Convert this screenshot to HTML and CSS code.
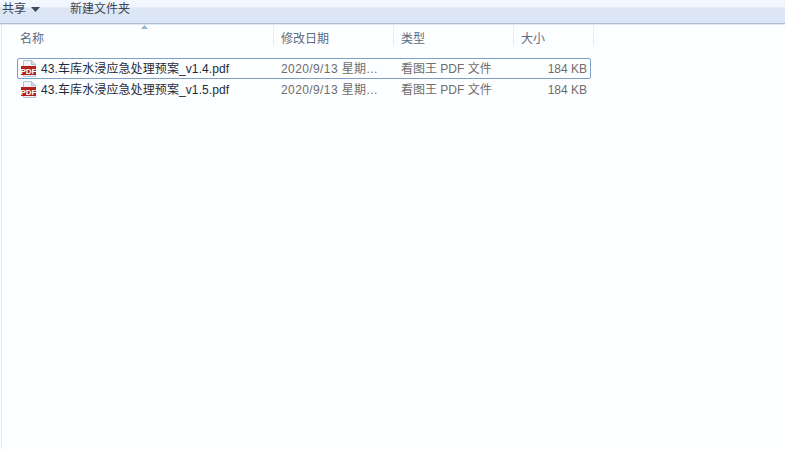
FILE: index.html
```html
<!DOCTYPE html>
<html lang="zh">
<head>
<meta charset="utf-8">
<title>文件夹</title>
<link rel="stylesheet" href="styles.css">
</head>
<body>
<div class="toolbar">
  <span class="tool share">共享<svg class="caret" width="9" height="5" viewBox="0 0 9 5"><path d="M0 0h9L4.500 5z" fill="#3c4a5c"/></svg></span>
  <span class="tool">新建文件夹</span>
</div>
<div class="pane">
  <div class="header">
    <div class="col c-name first">名称<svg class="sort" width="7" height="4" viewBox="0 0 7 4"><path d="M3.500 0L7 4H0z" fill="#8fb6d6"/></svg></div>
    <div class="col c-date">修改日期</div>
    <div class="col c-type">类型</div>
    <div class="col c-size">大小</div>
  </div>
  <div class="rows">
    <div class="row selected">
      <div class="cell c-name file">
        <svg class="icon" width="16" height="17" viewBox="0 0 16 17"><path d="M2.500 .5h8l4 4v12h-12z" fill="#eef4fa" stroke="#b4c3d4"/><path d="M10.500 .5v4h4z" fill="#cfdeec" stroke="#b4c3d4"/><rect x="0" y="6" width="15" height="9" fill="#b3211c"/><text x="7.500" y="13.700" class="pdf">PDF</text></svg>
        <span class="fname">43.车库水浸应急处理预案_v1.4.pdf</span>
      </div>
      <div class="cell c-date">2020/9/13 星期...</div>
      <div class="cell c-type">看图王 PDF 文件</div>
      <div class="cell c-size">184 KB</div>
    </div>
    <div class="row">
      <div class="cell c-name file">
        <svg class="icon" width="16" height="17" viewBox="0 0 16 17"><path d="M2.500 .5h8l4 4v12h-12z" fill="#eef4fa" stroke="#b4c3d4"/><path d="M10.500 .5v4h4z" fill="#cfdeec" stroke="#b4c3d4"/><rect x="0" y="6" width="15" height="9" fill="#b3211c"/><text x="7.500" y="13.700" class="pdf">PDF</text></svg>
        <span class="fname">43.车库水浸应急处理预案_v1.5.pdf</span>
      </div>
      <div class="cell c-date">2020/9/13 星期...</div>
      <div class="cell c-type">看图王 PDF 文件</div>
      <div class="cell c-size">184 KB</div>
    </div>
  </div>
</div>
</body>
</html>
```
FILE: styles.css
```css
html, body {
  margin: 0;
  height: 100%;
  overflow: hidden;
}
body {
  display: flex;
  flex-direction: column;
  background: #fdfeff;
  font-family: "Liberation Sans", "Noto Sans CJK SC", sans-serif;
  font-size: 12px;
  color: #1e2a38;
}
.toolbar {
  flex: none;
  height: 24px;
  box-sizing: border-box;
  display: flex;
  align-items: flex-start;
  padding: 2px 0 0 2px;
  gap: 30px;
  line-height: 14px;
  color: #3a4656;
  background: linear-gradient(#f4f9ff 0, #eff5fd 7px, #dce6f4 8px, #dce6f4 100%);
  border-bottom: 1px solid #aebdd3;
  box-shadow: 0 1px 0 #dfe8f3;
}
.tool {
  display: flex;
  align-items: center;
}
.caret {
  margin-left: 5px;
}
.pane {
  flex: 1;
  margin-left: 1px;
  border-left: 1px solid #dfe9f5;
  padding-left: 15px;
  display: flex;
  flex-direction: column;
}
.header {
  display: flex;
  height: 21px;
  margin-top: 1px;
  color: #5c6b7d;
}
.col {
  box-sizing: border-box;
  padding: 8px 0 0 7px;
  line-height: 13px;
  border-right: 1px solid #e6edf5;
  position: relative;
}
.col.first {
  padding-left: 3px;
}
.c-name { width: 258px; }
.c-date { width: 120px; }
.c-type { width: 120px; }
.c-size { width: 80px; }
.header .c-name { width: 257px; }
.sort {
  position: absolute;
  left: 124px;
  top: 0;
}
.rows {
  margin-top: 12px;
}
.row {
  display: flex;
  box-sizing: border-box;
  width: 574px;
  height: 21px;
  padding-top: 1px;
  line-height: 19px;
  border: 1px solid transparent;
  border-radius: 2px;
}
.selected {
  border-color: #7d9fc8;
}
.cell {
  box-sizing: border-box;
  color: #6d6d6d;
}
.row .c-name { width: 256px; }
.row .c-date { width: 120px; padding-left: 7px; letter-spacing: .4px; }
.row .c-type { width: 120px; padding-left: 7px; }
.row .c-size { width: 75px; text-align: right; padding-right: 2px; }
.file {
  display: flex;
  align-items: flex-start;
  padding-left: 3px;
  gap: 4px;
}
.fname {
  color: #1c2a3c;
  letter-spacing: .1px;
}
.icon {
  flex: none;
}
.pdf {
  font-family: "Liberation Sans", sans-serif;
  font-size: 8px;
  font-weight: 700;
  fill: #ffffff;
  text-anchor: middle;
}
```
